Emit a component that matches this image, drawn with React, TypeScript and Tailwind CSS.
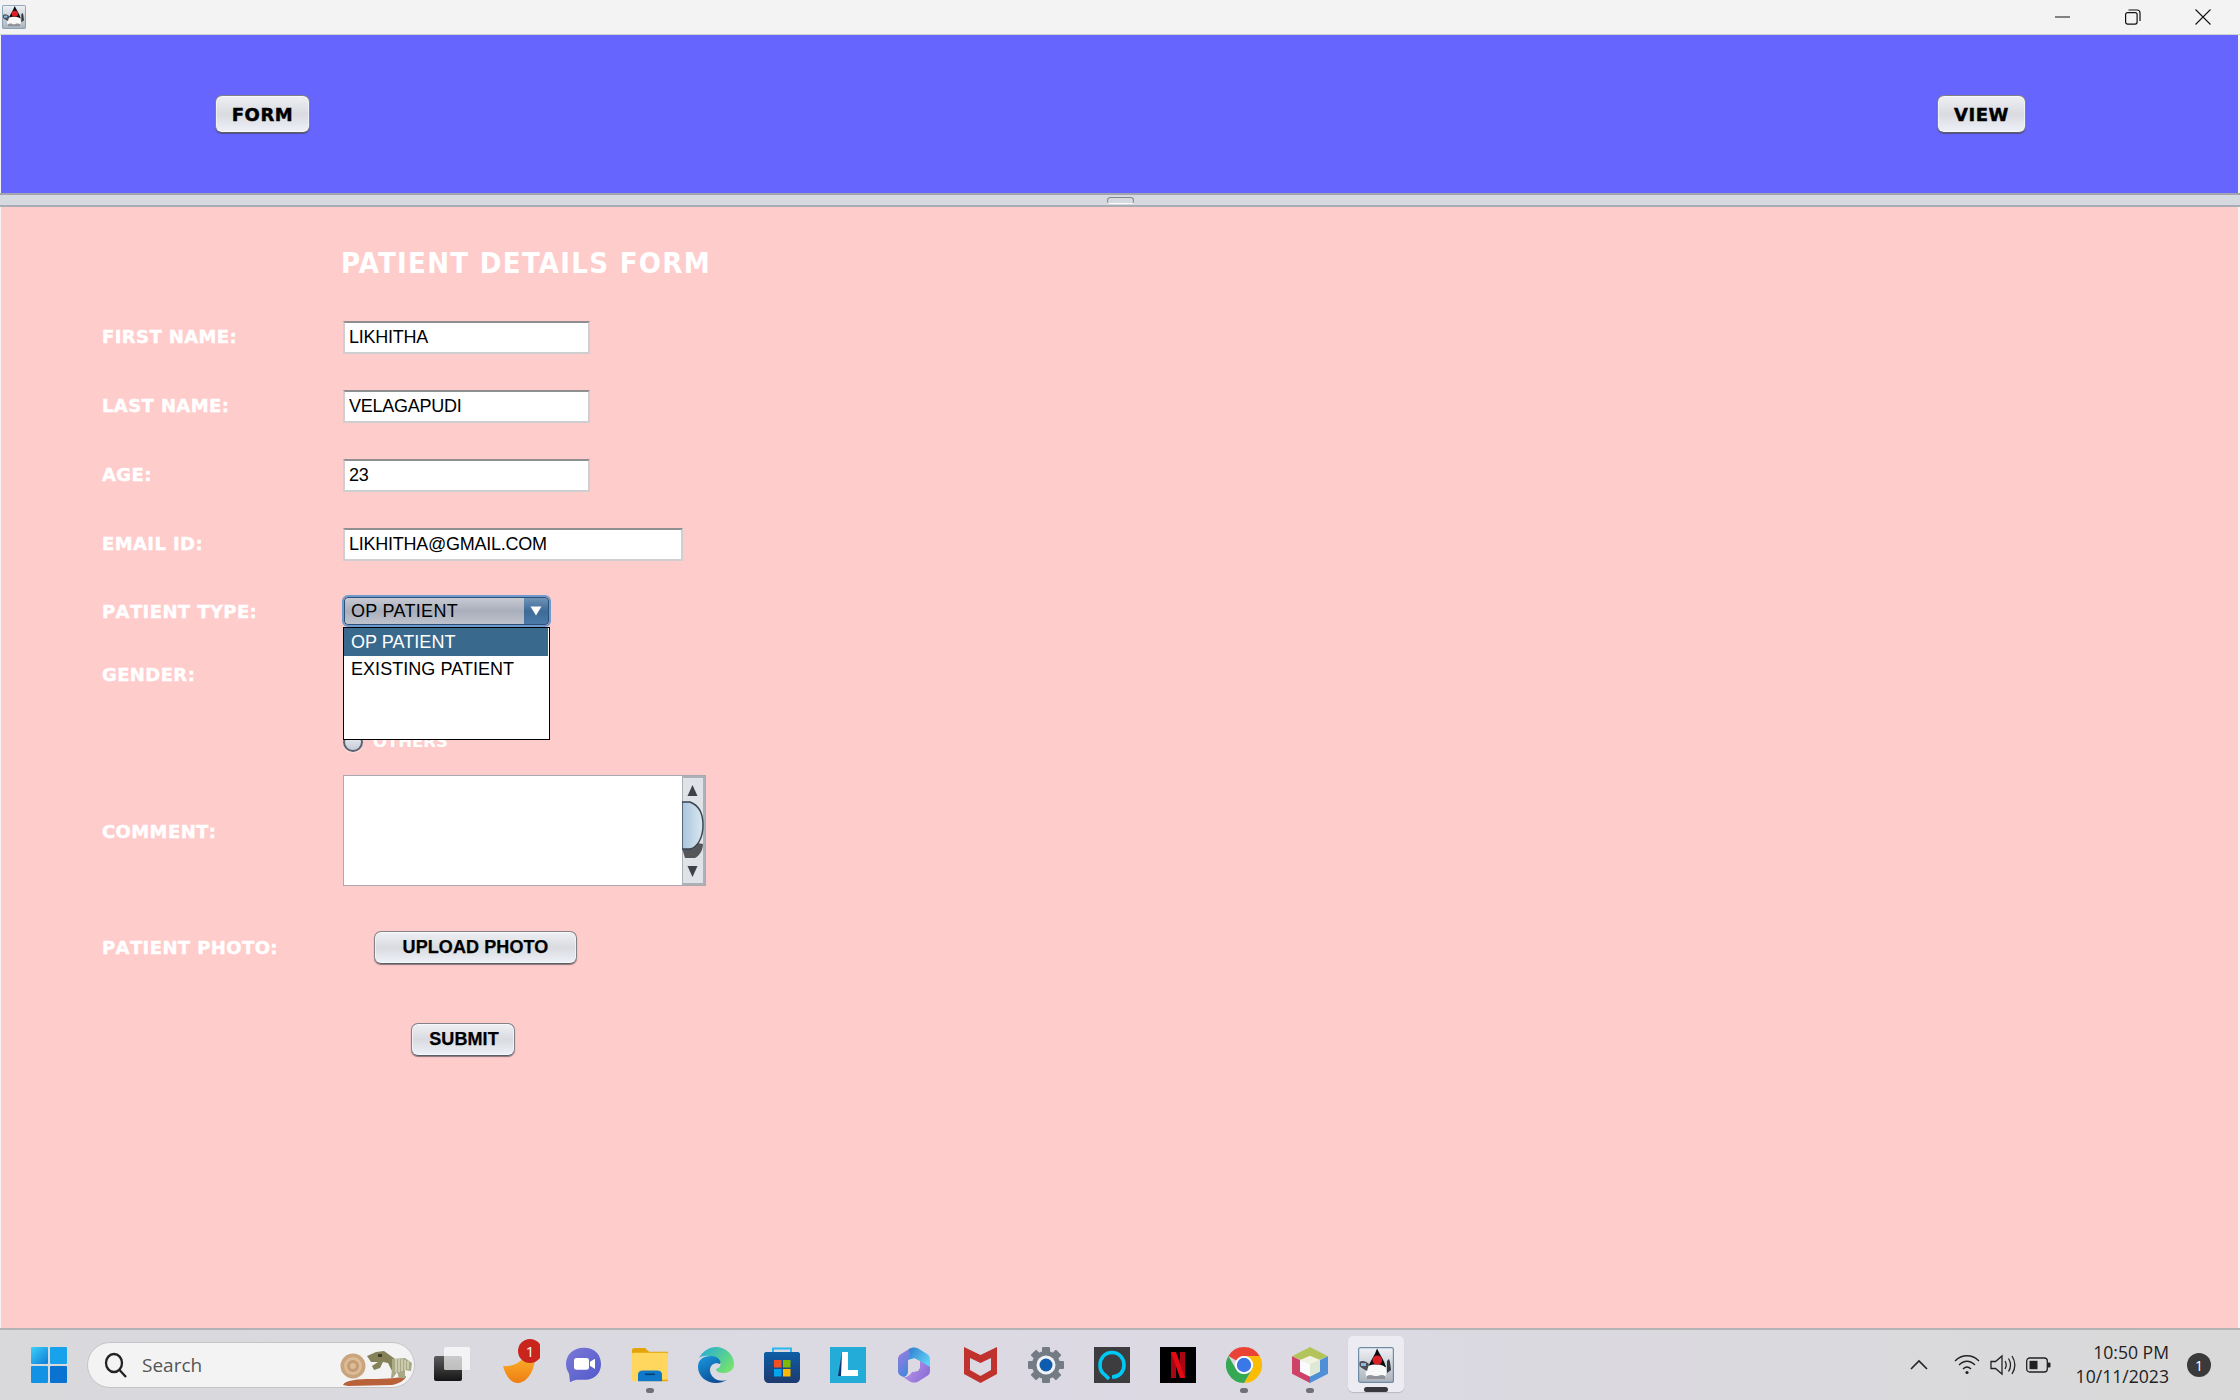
import React from "react";

const btn = "flex items-center justify-center rounded-[7px] border border-[#808288] border-b-[#5e5f65] bg-linear-to-b from-[#eff0f4] via-[#d9dbe0] to-[#eef1f8] text-black shadow-[0_1px_1px_rgba(60,60,70,0.6),inset_0_0_0_1px_rgba(255,255,255,0.55)]";
const label = "text-white font-bold text-[18px] tracking-[0.4px] [font-kerning:none] [-webkit-text-stroke:0.4px_white] [font-family:'DejaVu_Sans',sans-serif] leading-none";
const inputCls = "h-[33px] flex items-center bg-white border-2 border-[#cfcfd2] border-t-[#8f8f92] pl-[4px] text-[18px] text-black tracking-[-0.25px] [font-family:'Liberation_Sans',sans-serif]";
const stub = "font-bold text-[18px] [font-family:'DejaVu_Sans',sans-serif] tracking-[0.5px] [-webkit-text-stroke:0.45px_black]";
const lib = "font-bold text-[18px] tracking-[0.1px] [-webkit-text-stroke:0.25px_black] [font-family:'Liberation_Sans',sans-serif]";

function Duke({ size = 24, id }: { size?: number; id: string }) {
  return (
    <svg width={size} height={size} viewBox="0 0 36 36">
      <defs>
        <linearGradient id={id} x1="0" y1="0" x2="0" y2="1">
          <stop offset="0" stopColor="#eef1f5" />
          <stop offset="1" stopColor="#aab3bc" />
        </linearGradient>
      </defs>
      <rect x="0.6" y="0.6" width="34.8" height="34.8" rx="2" fill={`url(#${id})`} stroke="#6f8ca6" strokeWidth="1.2" />
      <path d="M19 1.5 C22 8 26 13 28 20 L10 20 C13 13 17 8 19 1.5 Z" fill="#0b0b0e" />
      <path d="M8 23 C8 19 12 17.5 18 17.5 C24 17.5 28 19 28 23 C29 27 28 30 25 31 L11 31 C8 30 7 27 8 23 Z" fill="#f8f8f8" />
      <path d="M9 29 C12 26.5 15 29 18 29 C21 29 24 26.5 27 29 L27 32 L9 32 Z" fill="#8f9298" />
      <path d="M1.5 15 C4 13 8 14 11 17 L9 24 C6 22 3 21 1.5 19 Z" fill="#4a4f58" />
      <path d="M3 16 L8 16 L8 19 L3 19 Z" fill="#8fb9de" />
      <path d="M29 14 L31 12 L32 15 L33 23 L29 26 Z" fill="#34373c" />
      <ellipse cx="19.3" cy="13" rx="4.8" ry="4.5" fill="#dc1f26" />
    </svg>
  );
}

function Cell({ children, dot, active }: { children: React.ReactNode; dot?: boolean; active?: boolean }) {
  return (
    <div className="relative w-[66px] h-full flex items-center justify-center">
      {active && <div className="absolute left-[5px] top-[6px] w-[56px] h-[56px] rounded-[5px] bg-[#ecebf2] shadow-[0_1px_1px_rgba(0,0,0,0.15)]" />}
      <div className="relative mt-[-1px] flex">{children}</div>
      {dot && <div className="absolute left-[29px] top-[58px] w-[8px] h-[5px] rounded-full bg-[#70707a]" />}
      {active && <div className="absolute left-[21px] top-[57px] w-[24px] h-[5px] rounded-full bg-[#38383e]" />}
    </div>
  );
}

const Icons = {
  TaskView: () => (
    <svg width="36" height="36" viewBox="0 0 36 36">
      <defs>
        <linearGradient id="tv" x1="0" y1="0" x2="0" y2="1">
          <stop offset="0" stopColor="#5c5c5e" />
          <stop offset="1" stopColor="#141414" />
        </linearGradient>
      </defs>
      <rect x="0" y="9" width="28" height="25" rx="2" fill="url(#tv)" />
      <rect x="10" y="0" width="26" height="23" rx="1.5" fill="#ffffff" fillOpacity="0.68" />
    </svg>
  ),
  Orange: () => (
    <svg width="44" height="46" viewBox="0 0 44 46" className="mt-[-5px]">
      <defs>
        <linearGradient id="or" x1="0" y1="0" x2="0" y2="1">
          <stop offset="0" stopColor="#fdb62e" />
          <stop offset="1" stopColor="#ee7d12" />
        </linearGradient>
      </defs>
      <path d="M7 27 C16 28 26 24 30 14 L39 14 C40 30 32 44 21 44 C14 44 9 35 7 27 Z" fill="url(#or)" />
      <circle cx="34" cy="12" r="12" fill="#c9251c" />
      <text x="34" y="17.5" textAnchor="middle" fontSize="15" fill="#fff" fontFamily="'Open Sans',sans-serif">1</text>
    </svg>
  ),
  Teams: () => (
    <svg width="36" height="36" viewBox="0 0 36 46" preserveAspectRatio="none">
      <defs>
        <linearGradient id="te" x1="0" y1="0" x2="1" y2="1">
          <stop offset="0" stopColor="#7b78d8" />
          <stop offset="1" stopColor="#5059c9" />
        </linearGradient>
      </defs>
      <path d="M18 1 C29 1 35 10 35 22 C35 35 27 42 18 42 C13 42 9 41 4 45 L3 34 C1 30 0 26 0 22 C0 10 7 1 18 1 Z" fill="url(#te)" />
      <rect x="8" y="14" width="15" height="15" rx="2.5" fill="#fff" />
      <path d="M24 19 L29 15 L29 28 L24 24 Z" fill="#fff" />
    </svg>
  ),
  Folder: () => (
    <svg width="36" height="34" viewBox="0 0 36 44" preserveAspectRatio="none">
      <path d="M0 3 C0 1 1 0 3 0 L13 0 L17 5 L36 5 L36 14 L0 14 Z" fill="#e2a406" />
      <rect x="0" y="6" width="36" height="37" rx="1.5" fill="#ffd75e" />
      <path d="M6 34 C6 31 8 29 11 29 L25 29 C28 29 30 31 30 34 L30 43 L6 43 Z" fill="#0f78c8" />
      <rect x="13" y="33" width="10" height="2" fill="#0a3c70" />
      <rect x="30" y="41" width="6" height="2" fill="#e6a80a" />
    </svg>
  ),
  Edge: () => (
    <svg width="36" height="36" viewBox="0 0 36 36">
      <defs>
        <linearGradient id="ed1" x1="0" y1="0" x2="1" y2="0.7">
          <stop offset="0" stopColor="#1fa9dc" />
          <stop offset="1" stopColor="#74e36e" />
        </linearGradient>
        <linearGradient id="ed2" x1="0" y1="0" x2="0.6" y2="1">
          <stop offset="0" stopColor="#1a9ae0" />
          <stop offset="1" stopColor="#0b4c94" />
        </linearGradient>
      </defs>
      <path d="M1 11 C5 4 11 0 18 0 C28 0 36 8 36 17 C36 23 31 26 26 26 C22 26 18 25 18 22 C24 21 24 14 18 11 C12 8 5 8 1 11 Z" fill="url(#ed1)" />
      <path d="M0 20 C0 12 6 9 13 9 C20 9 24 14 22 17 C17 15 12 18 12 23 C12 30 20 36 29 33 C25 35 22 36 18 36 C8 36 0 29 0 20 Z" fill="url(#ed2)" />
    </svg>
  ),
  Store: () => (
    <svg width="36" height="36" viewBox="0 0 36 36">
      <defs>
        <linearGradient id="st" x1="0" y1="0" x2="0" y2="1">
          <stop offset="0" stopColor="#0d5ea6" />
          <stop offset="1" stopColor="#1e3a6e" />
        </linearGradient>
      </defs>
      <path d="M9 6 L9 1.5 L27 1.5 L27 6" fill="none" stroke="#2bb8ee" strokeWidth="2" />
      <path d="M0 7 C0 6 1 5 2 5 L34 5 C35 5 36 6 36 7 L36 31 C36 34 34 36 31 36 L5 36 C2 36 0 34 0 31 Z" fill="url(#st)" />
      <rect x="10" y="13" width="7.5" height="7.5" fill="#f25022" />
      <rect x="19" y="13" width="7.5" height="7.5" fill="#7fba00" />
      <rect x="10" y="22" width="7.5" height="7.5" fill="#00a4ef" />
      <rect x="19" y="22" width="7.5" height="7.5" fill="#ffb900" />
    </svg>
  ),
  LApp: () => (
    <svg width="36" height="36" viewBox="0 0 36 36">
      <rect width="36" height="36" fill="#24acd8" />
      <path d="M12 5 L8 29 L14 29 Z" fill="#15306e" />
      <path d="M12 5 L18 5 L18 23 L28 23 L28 29 L11 29 Z" fill="#fff" />
    </svg>
  ),
  M365: () => (
    <svg width="32" height="36" viewBox="0 0 32 36">
      <defs>
        <linearGradient id="m1" x1="0" y1="0" x2="1" y2="0.6">
          <stop offset="0" stopColor="#2a6fc9" />
          <stop offset="1" stopColor="#5fd2f5" />
        </linearGradient>
        <linearGradient id="m2" x1="0" y1="0" x2="0.4" y2="1">
          <stop offset="0" stopColor="#a27be0" />
          <stop offset="1" stopColor="#4a86dc" />
        </linearGradient>
        <linearGradient id="m3" x1="0" y1="0" x2="1" y2="0.5">
          <stop offset="0" stopColor="#c49ce8" />
          <stop offset="1" stopColor="#8c6fd8" />
        </linearGradient>
      </defs>
      <path d="M11 2 C14 0 18 0 21 2 L29 7 C31 8 32 10 32 12 L32 22 L21 14 C18 12 14 11 10 13 L6 15 Z" fill="url(#m1)" />
      <path d="M11 2 L3 7 C1 8 0 10 0 12 L0 24 C0 26 1 28 3 29 L6 30 C9 29 10 27 10 24 L10 13 L12 8 Z" fill="url(#m2)" />
      <path d="M22 14 L32 20 L32 24 C32 26 31 28 29 29 L21 34 C18 36 14 36 11 34 L5 30 C9 31 12 28 14 25 L20 24 C22 22 22 18 22 14 Z" fill="url(#m3)" />
      <path d="M10 14 L16 11 L22 14 L22 21 L16 25 L10 21 Z" fill="#dcd9e3" />
    </svg>
  ),
  McAfee: () => (
    <svg width="33" height="36" viewBox="0 0 33 36">
      <path d="M0 0 L16.5 8 L33 0 L33 27 L16.5 36 L0 27 Z" fill="#c0322e" />
      <path d="M6 11 L16.5 16 L27 11 L27 23 L16.5 29 L6 23 Z" fill="#dcd9e3" />
    </svg>
  ),
  Gear: () => (
    <svg width="36" height="36" viewBox="-18 -18 36 36">
      <g fill="#737c85">
        <circle r="14" />
        {[0, 45, 90, 135, 180, 225, 270, 315].map((a) => (
          <rect key={a} x="-4" y="-18" width="8" height="7" rx="1" transform={`rotate(${a})`} />
        ))}
      </g>
      <circle r="9.5" fill="#f0f2f5" />
      <circle r="6.5" fill="#0d5cad" />
    </svg>
  ),
  Alexa: () => (
    <svg width="36" height="36" viewBox="0 0 36 36">
      <rect width="36" height="36" fill="#3d3d3f" />
      <path d="M15 32 L11 28 C8 26 6 22 6 18 C6 11 11 5.5 18 5.5 C25 5.5 30 11 30 18 C30 25 25 30 18 30" fill="none" stroke="#00c8f5" strokeWidth="3.6" />
    </svg>
  ),
  Netflix: () => (
    <svg width="36" height="36" viewBox="0 0 36 36">
      <rect width="36" height="36" fill="#000" />
      <rect x="11" y="5" width="5" height="26" fill="#a80610" />
      <rect x="20" y="5" width="5" height="26" fill="#a80610" />
      <path d="M11 5 L16 5 L25 31 L20 31 Z" fill="#e50914" />
    </svg>
  ),
  Chrome: () => (
    <svg width="36" height="36" viewBox="-18 -18 36 36">
      <path d="M0 -18 A18 18 0 0 1 15.6 -9 L0 -9 A9 9 0 0 0 -7.8 -4.5 L-15.6 -9 A18 18 0 0 1 0 -18 Z" fill="#ea4335" />
      <path d="M15.6 -9 A18 18 0 0 1 0 18 L7.8 4.5 A9 9 0 0 0 0 -9 Z" fill="#fbbc04" />
      <path d="M0 18 A18 18 0 0 1 -15.6 -9 L-7.8 4.5 A9 9 0 0 0 7.8 4.5 Z" fill="#34a853" />
      <circle r="9" fill="#fff" />
      <circle r="7.2" fill="#3b78e7" />
    </svg>
  ),
  Gem: () => (
    <svg width="36" height="36" viewBox="0 0 36 50" preserveAspectRatio="none">
      <path d="M18 0 L36 13 L18 23 L0 13 Z" fill="#b3c45a" />
      <path d="M0 13 L8 18 L8 34 L18 41 L18 50 L0 37 Z" fill="#cf4268" />
      <path d="M36 13 L28 18 L28 34 L18 41 L18 50 L36 37 Z" fill="#4f8fd8" />
      <path d="M8 18 L18 12 L28 18 L18 24 Z" fill="#f2f3e3" />
      <path d="M8 18 L18 24 L18 41 L8 34 Z" fill="#fbfbfd" />
      <path d="M28 18 L18 24 L18 41 L28 34 Z" fill="#dfe7d5" />
    </svg>
  ),
};

function Dino() {
  return (
    <svg width="80" height="44" viewBox="0 0 80 44" className="absolute right-[0px] top-0">
      <path d="M9 42 C11 37 24 36 38 36 C52 36 66 35 72 33 C72 37 64 41 58 42 L14 43 Z" fill="#b9623a" />
      <circle cx="19" cy="23" r="12.5" fill="#c9a47c" />
      <circle cx="19" cy="23" r="9" fill="#dcbc96" />
      <circle cx="19" cy="23" r="6" fill="#c49c74" />
      <circle cx="19" cy="23" r="3" fill="#dcbc96" />
      <path d="M33 13 L42 9 L50 8 L57 13 L65 19 L65 28 L58 28 L54 20 L49 19 L46 25 L40 27 L38 23 L44 19 L37 19 Z" fill="#85825a" />
      <path d="M44 11 L48 11 L48 14 L44 14 Z" fill="#3f3d2a" />
      <path d="M58 16 L71 15 L78 20 L77 28 L71 27 L71 35 L65 35 L63 29 L59 35 L57 35 L58 26 Z" fill="#aaa985" />
      <path d="M62 16 V29 M65 16 V29 M68 16 V28 M71 17 V27 M74 18 V26" stroke="#e8e6cf" strokeWidth="1.1" />
    </svg>
  );
}

function Radio() {
  return <div className="w-[20px] h-[20px] rounded-full border-2 border-[#5a6372] bg-linear-to-b from-[#eef0f5] to-[#c6ccd6] shadow-[0_1px_1px_rgba(255,255,255,0.5)]" />;
}

function Field({ name, value, wide }: { name: string; value: string; wide?: boolean }) {
  return (
    <div className="flex items-center h-[33px]">
      <div className={`${label} w-[241px] shrink-0 pb-[2px]`}>{name}</div>
      <div className={`${inputCls} ${wide ? "w-[340px]" : "w-[247px]"}`}>{value}</div>
    </div>
  );
}

function Scroll() {
  return (
    <svg width="23" height="109" viewBox="0 0 23 109" className="shrink-0">
      <defs>
        <linearGradient id="th" x1="0" y1="0" x2="1" y2="0">
          <stop offset="0" stopColor="#a8c4dc" />
          <stop offset="1" stopColor="#dae7f1" />
        </linearGradient>
      </defs>
      <rect width="23" height="109" fill="#aeb0b8" />
      <rect x="1" y="2" width="20" height="105" fill="#dfe2e7" />
      <path d="M10.5 9 L15.5 20 L5.5 20 Z" fill="#3e4147" />
      <path d="M5.5 90 L15.5 90 L10.5 101 Z" fill="#3e4147" />
      <path d="M0 72 L3 82 L13 82 C19 79 21 72 21 68 L0 64 Z" fill="#55565a" />
      <path d="M0 26 L8 26 C16 29 21 37 21 49 C21 61 16 71 8 73 L0 73 Z" fill="url(#th)" stroke="#39424f" strokeWidth="1.4" />
    </svg>
  );
}

export default function App() {
  return (
    <div className="w-[2240px] h-[1400px] flex flex-col overflow-hidden bg-[#f3f3f3]">
      {/* Title bar */}
      <div className="h-[35px] shrink-0 flex items-center bg-[#f3f3f4] border-b border-[#d2d2d4] pl-[2px]">
        <Duke size={24} id="dk1" />
        <div className="ml-auto flex items-center h-full pr-[29px] gap-[54px]">
          <svg width="16" height="16" viewBox="0 0 16 16"><path d="M0 8 H15" stroke="#111" strokeWidth="1" /></svg>
          <svg width="16" height="16" viewBox="0 0 16 16" fill="none" stroke="#111" strokeWidth="1.2"><rect x="0.6" y="3.6" width="11.5" height="11.5" rx="2" /><path d="M3.5 1 H12 C14 1 15 2 15 4 V12" /></svg>
          <svg width="16" height="16" viewBox="0 0 16 16" stroke="#111" strokeWidth="1.1"><path d="M0.5 0.5 L15.5 15.5 M15.5 0.5 L0.5 15.5" /></svg>
        </div>
      </div>

      {/* Blue panel */}
      <div className="h-[158px] shrink-0 ml-[1px] mr-[2px] bg-[#6666ff] flex items-center justify-between pl-[214px] pr-[212px]">
        <button className={`${btn} ${stub} w-[95px] h-[38px]`}>FORM</button>
        <button className={`${btn} ${stub} w-[89px] h-[38px]`}>VIEW</button>
      </div>

      {/* Split divider */}
      <div className="h-[14px] shrink-0 flex items-center justify-center bg-[#d6d9e0] border-t-2 border-t-[#a2a5ad] border-b-2 border-b-[#a9acb3]">
        <div className="w-[27px] h-[7px] rounded-full border border-[#84878f] border-b-white bg-[#d6d9e0]" />
      </div>

      {/* Form */}
      <div className="flex-1 min-h-0 ml-[1px] mr-[2px] bg-[#ffcccc] pl-[101px] pt-[40px] flex flex-col">
        <div className="h-[32px] ml-[239px] flex items-center text-white font-bold text-[29px] tracking-[1.3px] leading-none [font-family:'DejaVu_Sans_Condensed','DejaVu_Sans',sans-serif]">PATIENT DETAILS FORM</div>

        <div className="mt-[42px] flex flex-col gap-[36px]">
          <Field name="FIRST NAME:" value="LIKHITHA" />
          <Field name="LAST NAME:" value="VELAGAPUDI" />
          <Field name="AGE:" value="23" />
          <Field name="EMAIL ID:" value="LIKHITHA@GMAIL.COM" wide />
        </div>

        <div className="mt-[34px] flex items-center h-[32px]">
          <div className={`${label} w-[240px] shrink-0 pt-[2px]`}>PATIENT TYPE:</div>
          <div className="relative w-[209px] h-[32px]">
            <div className="h-full flex rounded-[6px] border-2 border-[#6d9bd0] overflow-hidden">
              <div className="flex-1 flex items-center pl-[6px] text-[18px] tracking-[0.3px] text-black bg-linear-to-b from-[#c7cad3] via-[#a9aebb] to-[#bfc3cd] border-y border-l border-[#2f4f74] rounded-l-[4px] [font-family:'Liberation_Sans',sans-serif]">OP PATIENT</div>
              <div className="w-[25px] flex items-center justify-center bg-linear-to-b from-[#6f93b8] via-[#3d6b98] to-[#4a7aa8] border-y border-r border-[#2f4f74] rounded-r-[4px]">
                <svg width="12" height="10" viewBox="0 0 12 10"><path d="M0.5 0.5 H11.5 L6 9.5 Z" fill="#fff" /></svg>
              </div>
            </div>
            <div className="absolute z-10 left-[1px] top-[32px] w-[207px] h-[113px] bg-white border-[1.5px] border-black [font-family:'Liberation_Sans',sans-serif] text-[18px] tracking-[0.05px]">
              <div className="h-[28px] flex items-center pl-[7px] mr-[1px] text-white bg-[#39698d]">OP PATIENT</div>
              <div className="h-[27px] flex items-center pl-[7px] text-black">EXISTING PATIENT</div>
            </div>
          </div>
        </div>

        <div className="mt-[33px] flex items-start h-[95px]">
          <div className={`${label} w-[241px] shrink-0 mt-[6px]`}>GENDER:</div>
          <div className="flex items-center gap-[10px] mt-[72px]">
            <Radio />
            <div className="text-white font-bold text-[16.5px] leading-none [font-family:'DejaVu_Sans',sans-serif]">OTHERS</div>
          </div>
        </div>

        <div className="mt-[20px] flex items-center h-[111px]">
          <div className={`${label} w-[241px] shrink-0 pt-[2px]`}>COMMENT:</div>
          <div className="w-[363px] h-[111px] flex bg-white border border-[#b0a8ae] border-t-[#a8a8b0]">
            <div className="flex-1" />
            <Scroll />
          </div>
        </div>

        <div className="mt-[45px] flex items-center h-[33px]">
          <div className={`${label} w-[272px] shrink-0 pt-[1px]`}>PATIENT PHOTO:</div>
          <button className={`${btn} ${lib} w-[203px] h-[33px]`}>UPLOAD PHOTO</button>
        </div>

        <button className={`${btn} ${lib} mt-[59px] ml-[309px] w-[104px] h-[33px] pl-[2px]`}>SUBMIT</button>
      </div>

      {/* Taskbar */}
      <div className="h-[72px] shrink-0 flex items-center border-t-2 border-t-[#b3b3b6] bg-linear-to-r from-[#d9d9dc] via-[#dcd9e4] to-[#d9d9d9]">
        <svg width="36" height="36" viewBox="0 0 36 36" className="ml-[31px] shrink-0">
          <defs>
            <linearGradient id="w1" x1="0" y1="0" x2="1" y2="1">
              <stop offset="0" stopColor="#3fd0fb" />
              <stop offset="1" stopColor="#0a7dd6" />
            </linearGradient>
          </defs>
          <rect x="0" y="0" width="17" height="17" rx="1" fill="url(#w1)" />
          <rect x="19" y="0" width="17" height="17" rx="1" fill="#18a2ec" />
          <rect x="0" y="19" width="17" height="17" rx="1" fill="#1292e4" />
          <rect x="19" y="19" width="17" height="17" rx="1" fill="#0a72d0" />
        </svg>

        <div className="relative ml-[20px] w-[328px] h-[46px] shrink-0 rounded-full bg-[#f3f3f3] border border-[#c4c4c6] flex items-center overflow-hidden">
          <svg width="24" height="26" viewBox="0 0 24 26" className="ml-[16px] shrink-0" fill="none" stroke="#222" strokeWidth="2.3">
            <ellipse cx="10" cy="11" rx="8" ry="9" />
            <path d="M15.5 18 L22 25" />
          </svg>
          <span className="ml-[14px] text-[19px] text-[#555] [font-family:'Open_Sans',sans-serif]">Search</span>
          <Dino />
        </div>

        <div className="flex h-full ml-[4px]">
          <Cell><Icons.TaskView /></Cell>
          <Cell><Icons.Orange /></Cell>
          <Cell><Icons.Teams /></Cell>
          <Cell dot><Icons.Folder /></Cell>
          <Cell><Icons.Edge /></Cell>
          <Cell><Icons.Store /></Cell>
          <Cell><Icons.LApp /></Cell>
          <Cell><Icons.M365 /></Cell>
          <Cell><Icons.McAfee /></Cell>
          <Cell><Icons.Gear /></Cell>
          <Cell><Icons.Alexa /></Cell>
          <Cell><Icons.Netflix /></Cell>
          <Cell dot><Icons.Chrome /></Cell>
          <Cell dot><Icons.Gem /></Cell>
          <Cell active><Duke size={36} id="dk2" /></Cell>
        </div>

        <div className="ml-auto flex items-center h-full">
          <svg width="18" height="12" viewBox="0 0 18 12" fill="none" stroke="#222" strokeWidth="1.6"><path d="M1 10 L9 2 L17 10" /></svg>
          <svg width="26" height="20" viewBox="0 0 26 20" fill="none" stroke="#222" strokeWidth="1.3" className="ml-[26px]">
            <path d="M1 6 C8 -1 18 -1 25 6" />
            <path d="M5 10 C10 5 16 5 21 10" />
            <path d="M9 14 C11.5 11.5 14.5 11.5 17 14" />
            <circle cx="13" cy="17.5" r="1.6" fill="#222" stroke="none" />
          </svg>
          <svg width="26" height="22" viewBox="0 0 26 22" fill="none" stroke="#222" strokeWidth="1.3" className="ml-[10px]">
            <path d="M1 7.5 H5.5 L12 2 V20 L5.5 14.5 H1 Z" />
            <path d="M15 7 C16.5 9.5 16.5 12.5 15 15" />
            <path d="M18.5 4.5 C21 8.5 21 13.5 18.5 17.5" />
            <path d="M22 2 C25.5 7.5 25.5 14.5 22 20" />
          </svg>
          <svg width="25" height="16" viewBox="0 0 25 16" className="ml-[10px]" fill="none">
            <rect x="0.7" y="1" width="20.6" height="14" rx="3" stroke="#222" strokeWidth="1.3" />
            <rect x="3.5" y="3.8" width="8" height="8.4" fill="#222" />
            <rect x="21.5" y="5.5" width="3" height="5" rx="1" fill="#222" />
          </svg>
          <div className="ml-[26px] mt-[-2px] w-[92px] flex flex-col items-end text-[17.6px] leading-[24px] text-[#222] whitespace-nowrap [font-family:'Open_Sans',sans-serif]">
            <div>10:50 PM</div>
            <div>10/11/2023</div>
          </div>
          <div className="ml-[18px] mr-[29px] w-[24px] h-[24px] rounded-full bg-[#3a3a3a] text-white text-[14px] flex items-center justify-center [font-family:'Open_Sans',sans-serif]">1</div>
        </div>
      </div>
    </div>
  );
}
